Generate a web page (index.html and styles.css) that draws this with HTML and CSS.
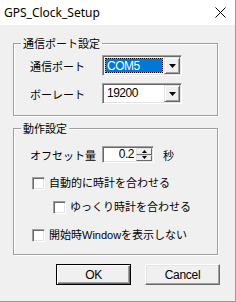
FILE: index.html
```html
<!DOCTYPE html>
<html lang="ja">
<head>
    <meta charset="UTF-8">
    <title>GPS_Clock_Setup</title>
    <link rel="stylesheet" href="styles.css">
</head>
<body>
    <div class="window">
        <div class="titlebar">
            <span class="title">GPS_Clock_Setup</span>
            <svg class="close" width="11" height="11" viewBox="0 0 11 11">
                <path d="M0.5 0.5 L10.5 10.5 M10.5 0.5 L0.5 10.5" stroke="#000" stroke-width="1" fill="none"/>
            </svg>
        </div>

        <div class="client">
            <fieldset class="group group-port">
                <legend>通信ポート設定</legend>
                <div class="row">
                    <span class="label">通信ポート</span>
                    <div class="combo">
                        <span class="combo-text selected">COM5</span>
                        <span class="drop-btn">
                            <svg width="7" height="4" viewBox="0 0 7 4"><polygon points="0,0 7,0 3.5,4" fill="#000"/></svg>
                        </span>
                    </div>
                </div>
                <div class="row">
                    <span class="label">ボーレート</span>
                    <div class="combo">
                        <span class="combo-text">19200</span>
                        <span class="drop-btn">
                            <svg width="7" height="4" viewBox="0 0 7 4"><polygon points="0,0 7,0 3.5,4" fill="#000"/></svg>
                        </span>
                    </div>
                </div>
            </fieldset>

            <fieldset class="group group-action">
                <legend>動作設定</legend>
                <div class="row row-offset">
                    <span class="label">オフセット量</span>
                    <div class="spin">
                        <span class="spin-value">0.2</span>
                        <span class="spin-btns">
                            <span class="spin-btn"><svg width="5" height="3" viewBox="0 0 5 3"><polygon points="2.5,0 5,3 0,3" fill="#000"/></svg></span>
                            <span class="spin-btn"><svg width="5" height="3" viewBox="0 0 5 3"><polygon points="0,0 5,0 2.5,3" fill="#000"/></svg></span>
                        </span>
                    </div>
                    <span class="unit">秒</span>
                </div>

                <label class="check check-auto"><span class="box"></span>自動的に時計を合わせる</label>
                <label class="check check-slow"><span class="box"></span>ゆっくり時計を合わせる</label>
                <label class="check check-window"><span class="box"></span>開始時Windowを表示しない</label>
            </fieldset>

            <div class="buttons">
                <button class="btn default">OK</button>
                <button class="btn">Cancel</button>
            </div>
        </div>
    </div>
</body>
</html>
```

FILE: styles.css
```css
* {
    margin: 0;
    padding: 0;
    box-sizing: border-box;
}

body {
    font-family: "Liberation Sans", "Noto Sans CJK JP", sans-serif;
    font-size: 11px;
    color: #000;
    background: #f0f0f0;
}

.window {
    width: 236px;
    height: 302px;
    background: #f0f0f0;
    border-right: 1px solid #9a9a9a;
    border-bottom: 1px solid #9a9a9a;
}

.titlebar {
    height: 25px;
    background: #fff;
    display: flex;
    align-items: center;
    justify-content: space-between;
    padding: 0 9px 0 4px;
}

.title {
    font-family: "Noto Sans", sans-serif;
    font-size: 12px;
}

.close {
    display: block;
}

.client {
    padding: 11px 17px 0 13px;
}

/* group boxes (etched) */
.group {
    border: 1px solid #a0a0a0;
    box-shadow: inset 1px 1px 0 #fff, 1px 1px 0 #fff;
    min-width: 0;
}

.group legend {
    margin-left: -9px;
    padding: 0 2px;
    font-family: "Noto Sans CJK JP", sans-serif;
    font-size: 11px;
    line-height: 14px;
}

.group-port {
    padding: 5px 0 11px 16px;
}

.group-action {
    margin-top: 5px;
    padding: 11px 0 12px 16px;
}

.row {
    display: flex;
    align-items: center;
    height: 21px;
}

.row + .row {
    margin-top: 7px;
}

.label {
    width: 72px;
    font-family: "Noto Sans CJK JP", sans-serif;
}

/* combo box */
.combo {
    width: 80px;
    height: 21px;
    display: flex;
    align-items: stretch;
    background: #fff;
    border: 1px solid;
    border-color: #a0a0a0 #fff #fff #a0a0a0;
    box-shadow: inset 1px 1px 0 #696969, inset -1px -1px 0 #e3e3e3;
    padding: 1px;
}

.combo-text {
    flex: 1;
    margin: 1px;
    padding-left: 2px;
    font-size: 12px;
    letter-spacing: -0.5px;
    line-height: 15px;
}

.combo-text.selected {
    color: #fff;
    border: 1px dotted #000;
    background: linear-gradient(#0078d7, #0078d7) padding-box, #ff8728;
    padding-left: 1px;
}

.drop-btn {
    width: 16px;
    display: flex;
    align-items: center;
    justify-content: center;
    background: #f0f0f0;
    border: 1px solid;
    border-color: #e3e3e3 #696969 #696969 #e3e3e3;
    box-shadow: inset 1px 1px 0 #fff, inset -1px -1px 0 #a0a0a0;
}

.drop-btn svg {
    display: block;
}

/* offset spinner */
.row-offset {
    height: 17px;
}

.spin {
    width: 52px;
    height: 17px;
    display: flex;
    background: #fff;
    border: 1px solid;
    border-color: #a0a0a0 #fff #fff #a0a0a0;
    box-shadow: inset 1px 1px 0 #696969, inset -1px -1px 0 #e3e3e3;
    padding: 1px;
}

.spin-value {
    flex: 1;
    text-align: right;
    padding-right: 2px;
    font-size: 12px;
    letter-spacing: -0.5px;
    line-height: 13px;
}

.spin-btns {
    width: 16px;
    display: flex;
    flex-direction: column;
}

.spin-btn {
    flex: 1;
    display: flex;
    align-items: center;
    justify-content: center;
    background: #f0f0f0;
    border: 1px solid;
    border-color: #e3e3e3 #696969 #696969 #e3e3e3;
}

.spin-btn svg {
    display: block;
}

.unit {
    margin-left: 9px;
    font-family: "Noto Sans CJK JP", sans-serif;
}

/* check boxes */
.check {
    display: flex;
    align-items: center;
    height: 13px;
    margin-left: 2px;
    line-height: 13px;
}

.box {
    width: 13px;
    height: 13px;
    margin-right: 4px;
    background: #fff;
    border: 1px solid;
    border-color: #a0a0a0 #fff #fff #a0a0a0;
    box-shadow: inset 1px 1px 0 #696969, inset -1px -1px 0 #e3e3e3;
}

.check-auto {
    margin-top: 14px;
}

.check-slow {
    margin-top: 11px;
    margin-left: 23px;
}

.check-window {
    margin-top: 15px;
}

/* dialog buttons */
.buttons {
    display: flex;
    justify-content: flex-end;
    gap: 14px;
    margin-top: 9px;
    margin-right: -2px;
}

.btn {
    width: 75px;
    height: 21px;
    font-family: "Liberation Sans", sans-serif;
    font-size: 12px;
    letter-spacing: -0.3px;
    background: #f0f0f0;
    border: 1px solid;
    border-color: #fff #696969 #696969 #fff;
    box-shadow: inset -1px -1px 0 #a0a0a0, inset 1px 1px 0 #e3e3e3;
}

.btn.default {
    border: 1px solid #000;
    box-shadow: inset 1px 1px 0 #fff, inset -1px -1px 0 #696969, inset -2px -2px 0 #a0a0a0;
}
```
